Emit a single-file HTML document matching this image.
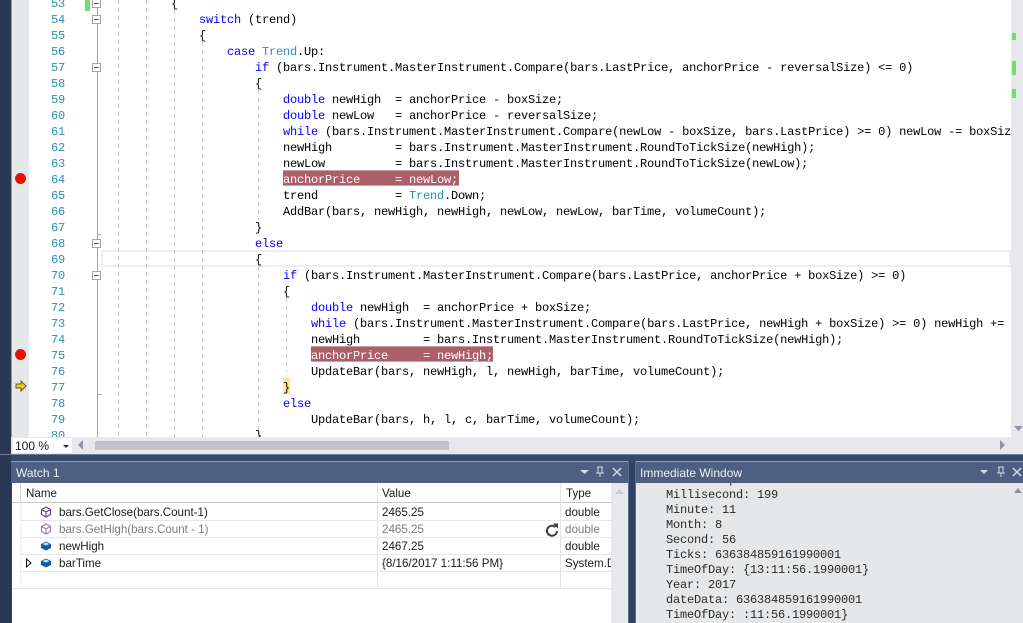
<!DOCTYPE html>
<html>
<head>
<meta charset="utf-8">
<style>
html,body{margin:0;padding:0;width:1023px;height:623px;overflow:hidden;background:#2f4366}
div,span,svg{box-sizing:border-box}
.a{position:absolute}
#ed{position:absolute;left:0;top:0;width:1011px;height:437px;overflow:hidden;background:#fff}
.c{position:absolute;margin-top:1px;height:16px;line-height:16px;font-family:"Liberation Mono",monospace;font-size:12px;letter-spacing:-.2px;white-space:pre;color:#000}
.n{position:absolute;margin-top:1px;left:51px;height:16px;line-height:16px;font-family:"Liberation Mono",monospace;font-size:12px;letter-spacing:-.2px;color:#2b91af}
.k{color:#0000ff}.t{color:#2b91af}
.g{position:absolute;width:1px;background:repeating-linear-gradient(to bottom,#c8c8c8 0,#c8c8c8 4px,transparent 4px,transparent 8px)}
.f{position:absolute;left:92px;width:9px;height:9px;border:1px solid #a5a5a5;background:#fff}
.f:after{content:"";position:absolute;left:1px;top:3px;width:5px;height:1px;background:#555}
.s{font-family:"Liberation Sans",sans-serif;font-size:11.6px;color:#1a1a1a;position:absolute;margin-top:1px;white-space:pre;height:17px;line-height:17px}
.r{position:absolute;height:1px;background:#e6e7ea}
.im{position:absolute;left:30px;margin-top:1px;font-family:"Liberation Mono",monospace;font-size:12px;letter-spacing:-.2px;line-height:15px;height:15px;color:#2a2a2a;white-space:pre}
.title{position:absolute;top:462px;height:21px;background:#4d6082;color:#eef0f5;font-family:"Liberation Sans",sans-serif;font-size:12px;line-height:23px;padding-left:5px}
</style>
</head>
<body>
<div class="a" style="left:0;top:0;width:11px;height:623px;background:#293955"></div>
<div id="ed">
<div class="a" style="left:0;top:0;width:11px;height:437px;background:#293955"></div>
<div class="a" style="left:11px;top:0;width:1px;height:437px;background:#8d99ae"></div>
<div class="a" style="left:12px;top:0;width:17px;height:437px;background:#e6e7e8"></div>
<div class="a" style="left:85px;top:0;width:5px;height:11px;background:#6fe06f"></div>
<div class="a" style="left:101px;top:250px;width:910px;height:17px;border:2px solid #eeeef2"></div>
<div class="a" style="left:97px;top:0;width:1px;height:437px;background:#a5a5a5"></div>
<div class="a" style="left:97px;top:234px;width:4px;height:1px;background:#a5a5a5"></div>
<div class="a" style="left:97px;top:394px;width:4px;height:1px;background:#a5a5a5"></div>
<div class="f" style="top:-1px"></div><div class="f" style="top:15px"></div><div class="f" style="top:63px"></div><div class="f" style="top:239px"></div><div class="f" style="top:271px"></div>
<div class="g" style="left:118px;top:0;height:437px"></div>
<div class="g" style="left:146px;top:0;height:437px"></div>
<div class="g" style="left:174px;top:10px;height:427px"></div>
<div class="g" style="left:202px;top:42px;height:395px"></div>
<div class="g" style="left:258px;top:90px;height:130px"></div>
<div class="g" style="left:258px;top:266px;height:164px"></div>
<div class="g" style="left:286px;top:298px;height:74px"></div>
<div class="a" style="left:283px;top:170px;width:176px;height:16px;background:#ab6069;border-top:1px solid #c9a0a5;border-bottom:1px solid #c9a0a5"></div>
<div class="a" style="left:311px;top:346px;width:182px;height:16px;background:#ab6069;border-top:1px solid #c9a0a5;border-bottom:1px solid #c9a0a5"></div>
<div class="a" style="left:283px;top:378px;width:7px;height:16px;background:#ffe98a"></div>
<svg class="a" style="left:12px;top:0" width="18" height="437"><circle cx="8.500" cy="178.500" r="5.500" fill="#e51400"/><circle cx="8.500" cy="354.500" r="5.500" fill="#e51400"/><path d="M4 384h5v-3l5 5-5 5v-3H4z" fill="#f5c52c" stroke="#6b5a1e" stroke-width="1"/></svg>
<span class="n" style="top:-5px">53</span><span class="n" style="top:11px">54</span><span class="n" style="top:27px">55</span><span class="n" style="top:43px">56</span><span class="n" style="top:59px">57</span><span class="n" style="top:75px">58</span><span class="n" style="top:91px">59</span><span class="n" style="top:107px">60</span><span class="n" style="top:123px">61</span><span class="n" style="top:139px">62</span><span class="n" style="top:155px">63</span><span class="n" style="top:171px">64</span><span class="n" style="top:187px">65</span><span class="n" style="top:203px">66</span><span class="n" style="top:219px">67</span><span class="n" style="top:235px">68</span><span class="n" style="top:251px">69</span><span class="n" style="top:267px">70</span><span class="n" style="top:283px">71</span><span class="n" style="top:299px">72</span><span class="n" style="top:315px">73</span><span class="n" style="top:331px">74</span><span class="n" style="top:347px">75</span><span class="n" style="top:363px">76</span><span class="n" style="top:379px">77</span><span class="n" style="top:395px">78</span><span class="n" style="top:411px">79</span><span class="n" style="top:427px">80</span>
<span class="c" style="left:171px;top:-5px">{</span>
<span class="c" style="left:199px;top:11px"><span class="k">switch</span> (trend)</span>
<span class="c" style="left:199px;top:27px">{</span>
<span class="c" style="left:227px;top:43px"><span class="k">case</span> <span class="t">Trend</span>.Up:</span>
<span class="c" style="left:255px;top:59px"><span class="k">if</span> (bars.Instrument.MasterInstrument.Compare(bars.LastPrice, anchorPrice - reversalSize) &lt;= 0)</span>
<span class="c" style="left:255px;top:75px">{</span>
<span class="c" style="left:283px;top:91px"><span class="k">double</span> newHigh  = anchorPrice - boxSize;</span>
<span class="c" style="left:283px;top:107px"><span class="k">double</span> newLow   = anchorPrice - reversalSize;</span>
<span class="c" style="left:283px;top:123px"><span class="k">while</span> (bars.Instrument.MasterInstrument.Compare(newLow - boxSize, bars.LastPrice) &gt;= 0) newLow -= boxSize;</span>
<span class="c" style="left:283px;top:139px">newHigh         = bars.Instrument.MasterInstrument.RoundToTickSize(newHigh);</span>
<span class="c" style="left:283px;top:155px">newLow          = bars.Instrument.MasterInstrument.RoundToTickSize(newLow);</span>
<span class="c" style="left:283px;top:171px;color:#fff">anchorPrice     = newLow;</span>
<span class="c" style="left:283px;top:187px">trend           = <span class="t">Trend</span>.Down;</span>
<span class="c" style="left:283px;top:203px">AddBar(bars, newHigh, newHigh, newLow, newLow, barTime, volumeCount);</span>
<span class="c" style="left:255px;top:219px">}</span>
<span class="c" style="left:255px;top:235px"><span class="k">else</span></span>
<span class="c" style="left:255px;top:251px">{</span>
<span class="c" style="left:283px;top:267px"><span class="k">if</span> (bars.Instrument.MasterInstrument.Compare(bars.LastPrice, anchorPrice + boxSize) &gt;= 0)</span>
<span class="c" style="left:283px;top:283px">{</span>
<span class="c" style="left:311px;top:299px"><span class="k">double</span> newHigh  = anchorPrice + boxSize;</span>
<span class="c" style="left:311px;top:315px"><span class="k">while</span> (bars.Instrument.MasterInstrument.Compare(bars.LastPrice, newHigh + boxSize) &gt;= 0) newHigh +=</span>
<span class="c" style="left:311px;top:331px">newHigh         = bars.Instrument.MasterInstrument.RoundToTickSize(newHigh);</span>
<span class="c" style="left:311px;top:347px;color:#fff">anchorPrice     = newHigh;</span>
<span class="c" style="left:311px;top:363px">UpdateBar(bars, newHigh, l, newHigh, barTime, volumeCount);</span>
<span class="c" style="left:283px;top:379px">}</span>
<span class="c" style="left:283px;top:395px"><span class="k">else</span></span>
<span class="c" style="left:311px;top:411px">UpdateBar(bars, h, l, c, barTime, volumeCount);</span>
<span class="c" style="left:255px;top:427px">}</span>
</div>
<!-- vertical scrollbar -->
<div class="a" style="left:1011px;top:0;width:12px;height:437px;background:#e8e8ec"></div>
<div class="a" style="left:1012px;top:33px;width:4px;height:7px;background:#6fe06f"></div>
<div class="a" style="left:1012px;top:61px;width:4px;height:14px;background:#6fe06f"></div>
<div class="a" style="left:1012px;top:89px;width:4px;height:9px;background:#6fe06f"></div>
<svg class="a" style="left:1014px;top:425px" width="9" height="7"><path d="M0 1h9L4.500 6z" fill="#8f93a6"/></svg>
<!-- bottom bar -->
<div class="a" style="left:11px;top:437px;width:1012px;height:17px;background:#e8e8ec"></div>
<div class="a" style="left:13px;top:438px;width:59px;height:15px;background:#fff;font:12px/17px 'Liberation Sans',sans-serif;color:#1a1a1a;padding-left:2px">100 %</div>
<svg class="a" style="left:62px;top:444px" width="8" height="5"><path d="M1 1h6L4 4z" fill="#333"/></svg>
<svg class="a" style="left:77px;top:440px" width="7" height="11"><path d="M6 0v10L1 5z" fill="#8f93a6"/></svg>
<div class="a" style="left:95px;top:441px;width:354px;height:9px;background:#c2c3c9"></div>
<svg class="a" style="left:999px;top:440px" width="7" height="11"><path d="M1 0v10l5-5z" fill="#8f93a6"/></svg>
<div class="a" style="left:0;top:454px;width:1023px;height:1px;background:#6b7b9a"></div>
<div class="a" style="left:11px;top:455px;width:1012px;height:6px;background:#364a6b"></div>
<!-- Watch -->
<div class="a" style="left:11px;top:461px;width:617px;height:1px;background:#8d9bb5"></div>
<div class="a" style="left:628px;top:461px;width:1px;height:162px;background:#5d6e8c"></div>
<div class="title" style="left:11px;width:617px">Watch 1</div>
<svg class="a" style="left:578px;top:466px" width="46" height="13"><path d="M2 4h9L6.500 8z" fill="#d5dae5"/><path d="M19 1h6M20 1v6h4V1M18 7h8M22 7v4" stroke="#d5dae5" fill="none"/><path d="M35 2l8 8M43 2l-8 8" stroke="#d5dae5" stroke-width="1.500" fill="none"/></svg>
<div class="a" style="left:12px;top:483px;width:616px;height:140px;background:#fff"></div>
<div class="a" style="left:12px;top:502px;width:599px;height:1px;background:#c8c9d0"></div>
<div class="a" style="left:20px;top:483px;width:1px;height:19px;background:#d5d6da"></div>
<div class="a" style="left:377px;top:483px;width:1px;height:105px;background:#e2e3e6"></div>
<div class="a" style="left:560px;top:483px;width:1px;height:105px;background:#e2e3e6"></div>
<div class="a" style="left:20px;top:502px;width:1px;height:86px;background:#eeeff1"></div>
<div class="r" style="left:21px;top:520px;width:590px"></div>
<div class="r" style="left:21px;top:537px;width:590px"></div>
<div class="r" style="left:21px;top:554px;width:590px"></div>
<div class="r" style="left:21px;top:571px;width:590px"></div>
<div class="r" style="left:12px;top:588px;width:599px"></div>
<div class="a" style="left:611px;top:483px;width:17px;height:140px;background:#e8e8ec"></div>
<svg class="a" style="left:615px;top:489px" width="10" height="6"><path d="M0 5h9L4.500 0z" fill="#c9cbd3"/></svg>
<span class="s" style="left:26px;top:484px">Name</span>
<span class="s" style="left:382px;top:484px">Value</span>
<span class="s" style="left:566px;top:484px">Type</span>
<span class="s" style="left:59px;top:503px">bars.GetClose(bars.Count-1)</span>
<span class="s" style="left:59px;top:520px;color:#7d7d7d">bars.GetHigh(bars.Count - 1)</span>
<span class="s" style="left:59px;top:537px">newHigh</span>
<span class="s" style="left:59px;top:554px">barTime</span>
<span class="s" style="left:382px;top:503px">2465.25</span>
<span class="s" style="left:382px;top:520px;color:#7d7d7d">2465.25</span>
<span class="s" style="left:382px;top:537px">2467.25</span>
<span class="s" style="left:382px;top:554px">{8/16/2017 1:11:56 PM}</span>
<span class="s" style="left:565px;top:503px">double</span>
<span class="s" style="left:565px;top:520px;color:#7d7d7d">double</span>
<span class="s" style="left:565px;top:537px">double</span>
<div class="a" style="left:565px;top:554px;width:46px;height:18px;overflow:hidden"><span class="s" style="left:0;top:0">System.DateTime</span></div>
<svg class="a" style="left:40px;top:506px" width="12" height="12"><path d="M6 1l4.500 2.500v5L6 11 1.500 8.500v-5zM1.500 3.500L6 6l4.500-2.500M6 6v5" fill="none" stroke="#6c3a9e" stroke-width="1.100"/></svg>
<svg class="a" style="left:40px;top:523px" width="12" height="12"><path d="M6 1l4.500 2.500v5L6 11 1.500 8.500v-5zM1.500 3.500L6 6l4.500-2.500M6 6v5" fill="none" stroke="#9a78bd" stroke-width="1.100"/></svg>
<svg class="a" style="left:40px;top:540px" width="12" height="12"><path d="M6 1.500l5 2.500v4L6 10.500 1 8V4z" fill="#0e5fa8"/><path d="M2.500 4L6 2.500 9.500 4 6 5.500z" fill="#cfe3f5"/></svg>
<svg class="a" style="left:40px;top:557px" width="12" height="12"><path d="M6 1.500l5 2.500v4L6 10.500 1 8V4z" fill="#0e5fa8"/><path d="M2.500 4L6 2.500 9.500 4 6 5.500z" fill="#cfe3f5"/></svg>
<svg class="a" style="left:25px;top:558px" width="8" height="10"><path d="M1.500 1v8L6 5z" fill="#fff" stroke="#111"/></svg>
<svg class="a" style="left:545px;top:523px" width="14" height="14"><path d="M10.500 4.200A5 5 0 1 0 12 8" fill="none" stroke="#3c3c3c" stroke-width="2"/><path d="M8 .5h5v5z" fill="#3c3c3c"/></svg>
<!-- Immediate -->
<div class="a" style="left:636px;top:461px;width:387px;height:1px;background:#8d9bb5"></div>
<div class="a" style="left:635px;top:461px;width:1px;height:162px;background:#5d6e8c"></div>
<div class="title" style="left:636px;width:387px;padding-left:4px">Immediate Window</div>
<svg class="a" style="left:978px;top:466px" width="45" height="13"><path d="M2 4h8L6 8z" fill="#d5dae5"/><path d="M20 1h6M21 1v6h4V1M19 7h8M23 7v4" stroke="#d5dae5" fill="none"/><path d="M35 2l8 8M43 2l-8 8" stroke="#d5dae5" stroke-width="1.500" fill="none"/></svg>
<div class="a" style="left:636px;top:483px;width:387px;height:140px;background:#e6e7e8;overflow:hidden">
<span class="im" style="top:-11px">Kind: Unspecified</span>
<span class="im" style="top:4px">Millisecond: 199</span>
<span class="im" style="top:19px">Minute: 11</span>
<span class="im" style="top:34px">Month: 8</span>
<span class="im" style="top:49px">Second: 56</span>
<span class="im" style="top:64px">Ticks: 636384859161990001</span>
<span class="im" style="top:79px">TimeOfDay: {13:11:56.1990001}</span>
<span class="im" style="top:94px">Year: 2017</span>
<span class="im" style="top:109px">dateData: 636384859161990001</span>
<span class="im" style="top:124px">TimeOfDay: :11:56.1990001}</span>
<svg class="a" style="left:378px;top:5px" width="9" height="6"><path d="M0 5h8L4 0z" fill="#8f93a6"/></svg>
</div>
</body>
</html>
